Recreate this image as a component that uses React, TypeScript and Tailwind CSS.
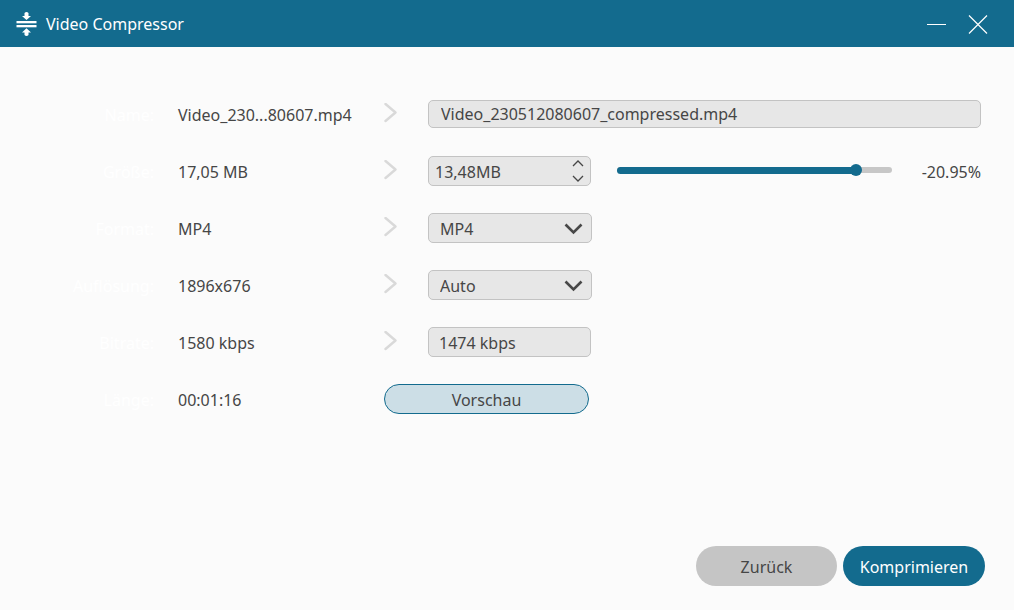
import { useState } from 'react';
import type { ReactNode } from 'react';

const fieldClass = 'rounded-[5px] border border-[#c3c3c3] bg-[#e7e7e7] text-[#464646] outline-none';

function LogoIcon() {
  return (
    <svg width="22" height="26" viewBox="0 0 22 26" fill="#ffffff" aria-hidden="true">
      <rect x="1.500" y="10" width="20" height="2.300" />
      <rect x="1.500" y="14" width="20" height="2.300" />
      <path d="M9.500 2q2-2 4 0V5h2.500L11.500 9 7 5h2.500z" />
      <path d="M9.500 24q2 2 4 0V21.500h2.500L11.500 17.200 7 21.500h2.500z" />
    </svg>
  );
}

function ArrowIcon() {
  return (
    <svg width="14" height="22" viewBox="0 0 14 22" fill="none" stroke="#d9d9d9" strokeWidth="2.4" strokeLinecap="round" strokeLinejoin="round" aria-hidden="true">
      <path d="M1.500 1 11.500 9.500 1.500 18" />
    </svg>
  );
}

interface RowProps {
  label: string;
  id: string;
  source: string;
  arrow?: boolean;
  children: ReactNode;
}

function Row({ label, id, source, arrow = true, children }: RowProps) {
  return (
    <div className="flex h-[30px] items-center">
      <label htmlFor={id} className="w-[154px] shrink-0 pt-0.5 text-right text-white">
        {label}
      </label>
      <span className="w-[230px] shrink-0 pt-0.5 pl-6">{source}</span>
      {arrow && (
        <span className="w-11 shrink-0">
          <ArrowIcon />
        </span>
      )}
      {children}
    </div>
  );
}

interface DropDownProps {
  id: string;
  options: string[];
}

function DropDown({ id, options }: DropDownProps) {
  return (
    <span className="grid w-[164px] items-center">
      <select id={id} className={`${fieldClass} col-start-1 row-start-1 h-[30px] w-full appearance-none pt-0.5 pr-10 pl-[11px]`}>
        {options.map((option) => (
          <option key={option}>{option}</option>
        ))}
      </select>
      <svg className="pointer-events-none col-start-1 row-start-1 mr-2 justify-self-end" width="20" height="14" viewBox="0 0 20 14" fill="none" stroke="#484848" strokeWidth="2.600" aria-hidden="true">
        <path d="M1.500 3.500 9.500 11.500 17.500 3.500" />
      </svg>
    </span>
  );
}

const SIZE_MAX = 1000;

export default function App() {
  const [name, setName] = useState('Video_230512080607_compressed.mp4');
  const [size, setSize] = useState('13,48MB');
  const [bitrate, setBitrate] = useState('1474 kbps');
  const [level, setLevel] = useState(886);

  const step = (amount: number) => {
    const value = parseFloat(size.replace(',', '.')) + amount;
    setSize(`${value.toFixed(2).replace('.', ',')}MB`);
  };

  return (
    <div className="flex min-h-screen flex-col bg-[#fbfbfb] font-['Noto_Sans',sans-serif] text-base leading-6 text-[#464646]">
      <header className="flex h-[47px] items-center bg-[#136b8e] pr-[26px] pl-[15px] text-white">
        <LogoIcon />
        <h1 className="ml-[9px] flex-1">Video Compressor</h1>
        <button type="button" aria-label="Minimieren" className="mr-[22px]">
          <svg width="20" height="20" viewBox="0 0 20 20" stroke="#ffffff" strokeWidth="1" aria-hidden="true">
            <path d="M1 10.500H20" />
          </svg>
        </button>
        <button type="button" aria-label="Schließen">
          <svg width="20" height="20" viewBox="0 0 20 20" stroke="#ffffff" strokeWidth="1.200" aria-hidden="true">
            <path d="M1 1.500 19 19.500M19 1.500 1 19.500" />
          </svg>
        </button>
      </header>

      <main className="flex flex-1 flex-col gap-[27px] pt-[52px] pr-[33px]">
        <Row label="Name:" id="name" source="Video_230...80607.mp4">
          <input
            id="name"
            type="text"
            value={name}
            onChange={(event) => setName(event.target.value)}
            className={`${fieldClass} h-7 min-w-0 flex-1 px-3`}
          />
        </Row>

        <Row label="Größe:" id="size" source="17,05 MB">
          <div className={`${fieldClass} flex h-[30px] w-[163px] shrink-0`}>
            <input
              id="size"
              type="text"
              value={size}
              onChange={(event) => setSize(event.target.value)}
              className="min-w-0 flex-1 bg-transparent pt-0.5 pl-1.5 outline-none"
            />
            <div className="flex w-6 flex-col justify-between">
              <button type="button" aria-label="Größer" onClick={() => step(0.01)} className="flex justify-center py-[3px]">
                <svg width="12" height="7" viewBox="0 0 12 7" fill="none" stroke="#464646" strokeWidth="1.300" aria-hidden="true">
                  <path d="M1 6 6 1 11 6" />
                </svg>
              </button>
              <button type="button" aria-label="Kleiner" onClick={() => step(-0.01)} className="flex justify-center py-[3px]">
                <svg width="12" height="7" viewBox="0 0 12 7" fill="none" stroke="#464646" strokeWidth="1.300" aria-hidden="true">
                  <path d="M1 1 6 6 11 1" />
                </svg>
              </button>
            </div>
          </div>
          <div className="ml-[26px] grid min-w-0 flex-1 items-center pb-0.5">
            <div className="col-start-1 row-start-1 h-1.5 rounded-full bg-[#c7c7c7]" />
            <div
              className="col-start-1 row-start-1 h-[7px] rounded-full bg-[#136b8e]"
              style={{ width: `${(level / SIZE_MAX) * 100}%` }}
            />
            <input
              type="range"
              aria-label="Kompression"
              min={0}
              max={SIZE_MAX}
              value={level}
              onChange={(event) => setLevel(Number(event.target.value))}
              className="col-start-1 row-start-1 h-3 w-full appearance-none bg-transparent [&::-webkit-slider-thumb]:size-3 [&::-webkit-slider-thumb]:appearance-none [&::-webkit-slider-thumb]:rounded-full [&::-webkit-slider-thumb]:bg-[#136b8e]"
            />
          </div>
          <span className="ml-[25px] w-16 pt-0.5 text-right">-20.95%</span>
        </Row>

        <Row label="Format:" id="format" source="MP4">
          <DropDown id="format" options={['MP4', 'MOV', 'AVI', 'MKV']} />
        </Row>

        <Row label="Auflösung:" id="resolution" source="1896x676">
          <DropDown id="resolution" options={['Auto', '1896x676']} />
        </Row>

        <Row label="Bitrate:" id="bitrate" source="1580 kbps">
          <input
            id="bitrate"
            type="text"
            value={bitrate}
            onChange={(event) => setBitrate(event.target.value)}
            className={`${fieldClass} h-[30px] w-[163px] px-2.5 pt-0.5`}
          />
        </Row>

        <Row label="Länge:" id="preview" source="00:01:16" arrow={false}>
          <button id="preview" type="button" className="h-[30px] w-[205px] rounded-full border border-[#136b8e] bg-[#ccdee6] pt-0.5">
            Vorschau
          </button>
        </Row>
      </main>

      <footer className="flex justify-end gap-1.5 pt-6 pr-[29px] pb-6">
        <button type="button" className="h-10 w-[141px] rounded-full bg-[#c5c5c5] pt-0.5">
          Zurück
        </button>
        <button type="button" className="h-10 w-[142px] rounded-full bg-[#136b8e] pt-0.5 text-white">
          Komprimieren
        </button>
      </footer>
    </div>
  );
}
